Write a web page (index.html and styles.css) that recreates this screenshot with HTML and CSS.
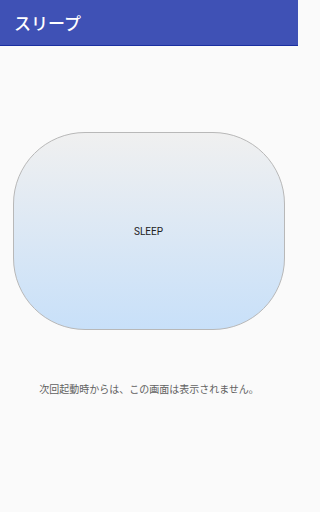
FILE: index.html
```html
<!DOCTYPE html>
<html lang="ja">
<head>
<meta charset="utf-8">
<link rel="stylesheet" href="styles.css">
</head>
<body>
<header class="appbar"><h1 class="title">スリープ</h1></header>
<main class="content">
  <button class="sleep-btn">SLEEP</button>
  <p class="note">次回起動時からは、この画面は表示されません。</p>
</main>
</body>
</html>
```
FILE: styles.css
```css
html, body {
  margin: 0;
  padding: 0;
}
html {
  background: #fafafa;
}
body {
  width: 298px;
  height: 512px;
  background: #fafafa;
  font-family: Roboto, "Noto Sans CJK JP", sans-serif;
  overflow: hidden;
}
.appbar {
  height: 45px;
  background: #3f51b5;
  border-bottom: 1px solid #1a2fa0;
  display: flex;
  align-items: center;
  padding-left: 14px;
}
.title {
  margin: 0;
  color: #fff;
  font-family: "Noto Sans CJK JP", sans-serif;
  font-size: 17px;
  font-weight: 500;
  line-height: 1;
  margin-top: 0;
}
.content {
  display: flex;
  flex-direction: column;
  align-items: center;
  padding-top: 86px;
}
.sleep-btn {
  width: 272px;
  height: 198px;
  margin-left: -1px;
  border: 1px solid #b8b8b8;
  border-radius: 72px;
  background: linear-gradient(#f0f0f0, #c8e0f9);
  font-family: Roboto, sans-serif;
  font-size: 10px;
  color: #222;
  padding: 0;
}
.note {
  margin: 52px 0 0;
  font-family: "Noto Sans CJK JP", sans-serif;
  font-size: 10px;
  color: #616161;
  line-height: 14px;
}
```
